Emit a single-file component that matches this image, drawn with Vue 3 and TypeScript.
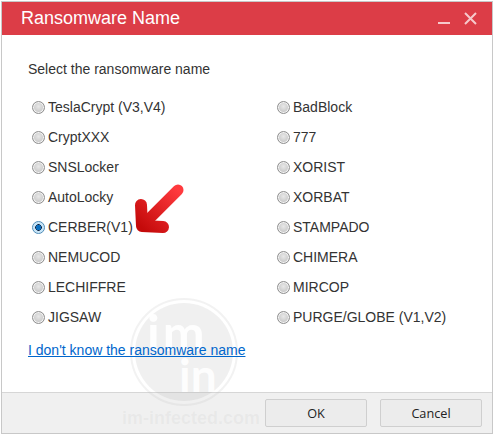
<script setup lang="ts">
const left: string[] = ['TeslaCrypt (V3,V4)', 'CryptXXX', 'SNSLocker', 'AutoLocky', 'CERBER(V1)', 'NEMUCOD', 'LECHIFFRE', 'JIGSAW']
const right: string[] = ['BadBlock', '777', 'XORIST', 'XORBAT', 'STAMPADO', 'CHIMERA', 'MIRCOP', 'PURGE/GLOBE (V1,V2)']
const columns: string[][] = [left, right]
const selected = 'CERBER(V1)'
</script>

<template>
  <div class="page">
    <div class="window">
      <header class="titlebar">
        <span class="title">Ransomware Name</span>
        <div class="controls">
          <svg width="13" height="13" viewBox="0 0 13 13"><path d="M0 11h12" stroke="#f6c9cc" stroke-width="2" fill="none" /></svg>
          <svg width="13" height="13" viewBox="0 0 13 13"><path d="M1 1l11 11M12 1L1 12" stroke="#f6c9cc" stroke-width="2" fill="none" /></svg>
        </div>
      </header>
      <main class="body">
        <p class="prompt">Select the ransomware name</p>
        <div class="options">
          <div v-for="(col, i) in columns" :key="i" class="column">
            <div v-for="name in col" :key="name" class="option">
              <span class="radio" :class="{ checked: name === selected }"></span>
              <span class="label">{{ name }}</span>
            </div>
          </div>
        </div>
        <a class="link" href="#">I don't know the ransomware name</a>
      </main>
      <footer class="footer">
        <button class="btn">OK</button>
        <button class="btn">Cancel</button>
      </footer>

      <svg class="arrow" width="60" height="60" viewBox="0 0 60 60">
        <defs>
          <linearGradient id="arrowFill" gradientUnits="userSpaceOnUse" x1="46" y1="8" x2="10" y2="46">
            <stop offset="0" stop-color="#ff3a3e" />
            <stop offset="1" stop-color="#c40a0a" />
          </linearGradient>
        </defs>
        <path d="M46 8L11 43" stroke="url(#arrowFill)" stroke-width="11" stroke-linecap="round" fill="none" />
        <path d="M9 23L10 44L31 45" stroke="url(#arrowFill)" stroke-width="12" stroke-linecap="round" stroke-linejoin="round" fill="none" />
      </svg>

      <div class="mark">
        <div class="disc">
          <span class="mark-im">im</span>
          <span class="mark-in">in</span>
        </div>
      </div>
      <div class="mark-text">im-infected.com</div>
    </div>
  </div>
</template>

<style>
html, body { margin: 0; background: #fff; }
</style>

<style scoped>
.page {
  width: 495px;
  height: 436px;
  padding: 1px 1px 2px 1px;
  box-sizing: border-box;
  background: #fff;
  font-family: "Liberation Sans", Arial, sans-serif;
}
.window {
  position: relative;
  width: 492px;
  height: 433px;
  box-sizing: border-box;
  border: 1px solid #c8c8c8;
  display: flex;
  flex-direction: column;
  overflow: hidden;
  background: #fff;
}
.titlebar {
  height: 33px;
  flex: none;
  background: #dc3d47;
  display: flex;
  align-items: center;
  justify-content: space-between;
  padding: 0 15px 0 19px;
}
.title { color: #fff; font-size: 18px; line-height: 33px; }
.controls { display: flex; gap: 13px; align-items: center; }
.body {
  position: relative;
  z-index: 1;
  flex: 1;
  padding: 0 26px;
  min-height: 0;
}
.prompt {
  margin: 26px 0 0;
  font-size: 14px;
  line-height: 16px;
  color: #333;
}
.options {
  display: flex;
  margin-top: 15px;
}
.column { flex: 0 0 245px; }
.option {
  height: 30px;
  display: flex;
  align-items: center;
  padding-left: 4px;
}
.radio {
  width: 13px;
  height: 13px;
  box-sizing: border-box;
  border-radius: 50%;
  border: 1px solid #8f8f8f;
  background: radial-gradient(circle at 50% 40%, #e8e8e8, #b8b8b8);
  box-shadow: inset 0 0 0 1px #f4f4f4;
  margin-right: 3px;
  flex: none;
}
.radio.checked {
  border-color: #4d8cb8;
  background: radial-gradient(circle, #0a6fc0 0 2.5px, #101f3a 3px, #bfe0f5 3.5px, #e4f3fc 100%);
  box-shadow: none;
}
.label { font-size: 14px; color: #333; line-height: 16px; }
.link {
  display: block;
  margin-top: 10px;
  font-size: 14px;
  line-height: 16px;
  color: #0066cc;
  text-decoration: underline;
}
.footer {
  height: 41px;
  flex: none;
  box-sizing: border-box;
  border-top: 1px solid #d6d6d6;
  background: #f0f0f0;
  display: flex;
  justify-content: flex-end;
  align-items: center;
  gap: 13px;
  padding: 0 10px 0 0;
}
.btn {
  width: 102px;
  height: 28px;
  box-sizing: border-box;
  border: 1px solid #cfcfcf;
  border-radius: 2px;
  background: #ececec;
  font-family: "Open Sans", "Noto Sans", sans-serif;
  font-size: 12.7px;
  color: #222;
  padding: 0;
}
.arrow {
  position: absolute;
  z-index: 2;
  left: 130px;
  top: 180px;
}
.mark {
  position: absolute;
  left: 128px;
  top: 296px;
  width: 108px;
  height: 108px;
  box-sizing: border-box;
  border: 2px solid rgba(190, 190, 190, 0.2);
  border-radius: 50%;
  padding: 3px;
  pointer-events: none;
}
.disc {
  position: relative;
  width: 100%;
  height: 100%;
  border-radius: 50%;
  background: rgba(170, 170, 170, 0.18);
  color: rgba(255, 255, 255, 0.9);
  font-family: "Lato", "Liberation Sans", sans-serif;
  font-weight: 700;
  font-size: 50px;
  line-height: 40px;
}
.mark-im { position: absolute; left: 12px; top: 9px; letter-spacing: 3px; }
.mark-in { position: absolute; left: 44px; top: 52px; font-size: 46px; }
.mark-text {
  position: absolute;
  left: 120px;
  top: 406px;
  font-size: 18px;
  font-weight: 700;
  color: rgba(160, 160, 160, 0.1);
  pointer-events: none;
}
</style>
